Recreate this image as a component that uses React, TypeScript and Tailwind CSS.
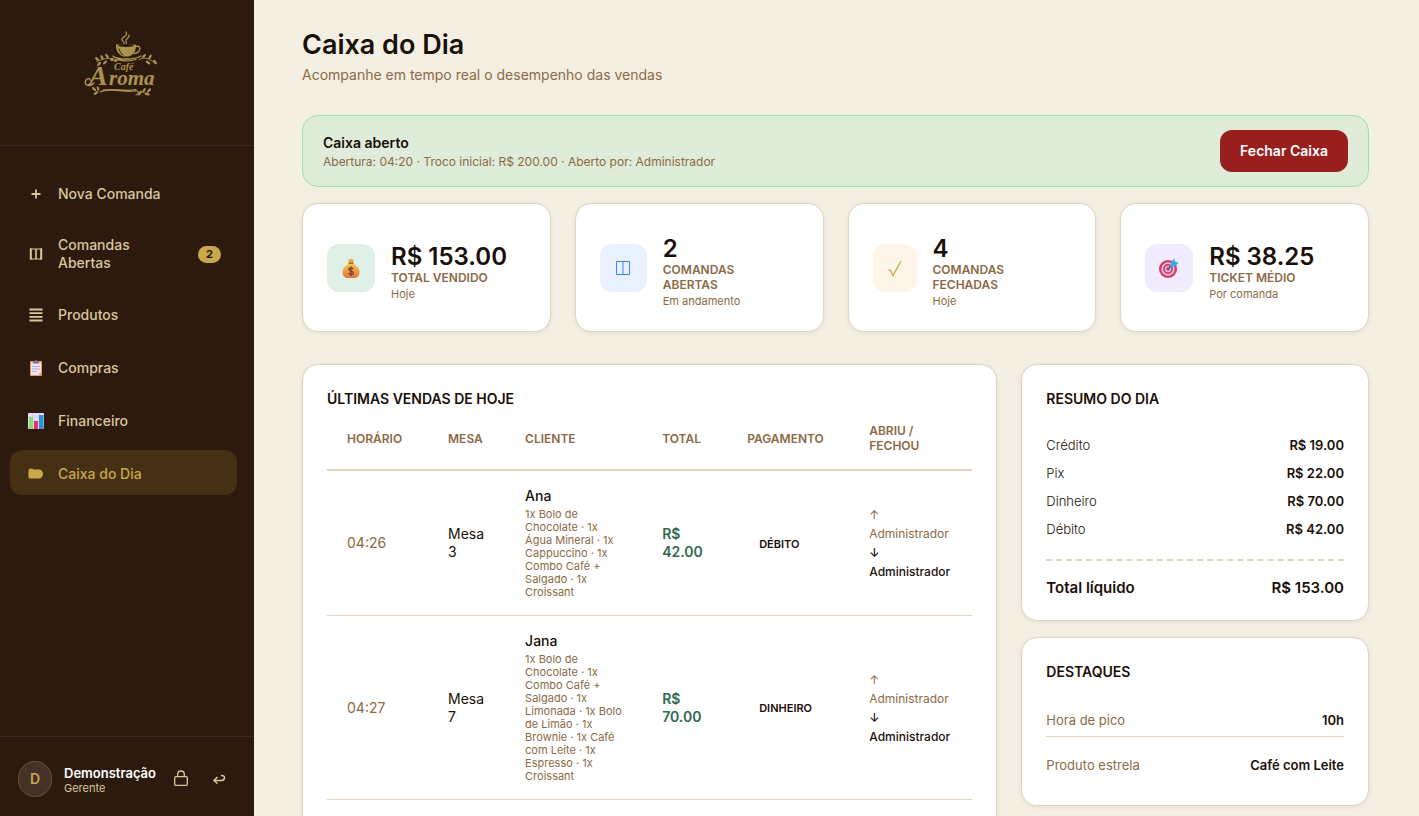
import type { ReactNode } from "react";
import clsx from "clsx";

type NavItemType = {
  label: string;
  icon: ReactNode;
  badge?: number;
  active?: boolean;
};

type SaleType = {
  time: string;
  table: string;
  client: string;
  items: string;
  total: string;
  payment: string;
};

const Logo = () => (
  <svg
    width="76"
    height="66"
    viewBox="0 0 76 66"
    fill="none"
    stroke="#ab9350"
    strokeLinecap="round"
    role="img"
    aria-label="Café Aroma"
  >
    {/* Steam */}
    <path d="M43 1c3 4-5 5-4 8 1 2 3 2 2 4M46 4c1 3-4 4-3 6 0 1 1 2 0 3" strokeWidth="1.300" />
    {/* Cup */}
    <path d="M33.500 14h19c0 7-3 10-7 11h-5c-4-1-7-4-7-11z" fill="#ab9350" strokeWidth="1" />
    <ellipse cx="43" cy="14.500" rx="8" ry="1.500" fill="#2c1a0f" stroke="none" />
    <path d="M36 18c1 3 2 5 4 6" stroke="#2c1a0f" strokeWidth="1" />
    <path d="M52.500 15.500c4-1 5 1 4 3.500-1 3-4 3.500-6 3.500" strokeWidth="1.400" />
    <path d="M30 25c4 4 22 4 28 0M34 28.500c6 1.500 14 1.500 19 0" strokeWidth="1.300" />
    {/* Branches */}
    <path d="M31 28.500c-6-2-11-1-17 2M56 28.500c6-3 11-1 16 4" strokeWidth=".9" />
    <g fill="#ab9350" stroke="none">
      <ellipse cx="24" cy="25" rx="2.600" ry="1.200" transform="rotate(55 24 25)" />
      <ellipse cx="19" cy="26.500" rx="2.600" ry="1.200" transform="rotate(60 19 26.500)" />
      <ellipse cx="14" cy="28" rx="2.400" ry="1.200" transform="rotate(40 14 28)" />
      <ellipse cx="22" cy="31.500" rx="2.600" ry="1.200" transform="rotate(-45 22 31.500)" />
      <ellipse cx="16" cy="33" rx="2.600" ry="1.200" transform="rotate(-50 16 33)" />
      <ellipse cx="61" cy="25" rx="2.600" ry="1.200" transform="rotate(-45 61 25)" />
      <ellipse cx="67" cy="26" rx="2.600" ry="1.200" transform="rotate(-60 67 26)" />
      <ellipse cx="65" cy="31.500" rx="2.600" ry="1.200" transform="rotate(35 65 31.500)" />
      <ellipse cx="72" cy="31" rx="2.600" ry="1.200" transform="rotate(50 72 31)" />
      <circle cx="29" cy="28.500" r="1.800" />
      <circle cx="32.500" cy="29.500" r="1.600" />
    </g>
    <g fill="#ab9350" stroke="none" className="font-['Liberation_Serif',serif] font-bold italic">
      <text x="31" y="39" className="text-[10px]">
        Café
      </text>
      <text x="6" y="54" className="text-[28px]">
        A
      </text>
      <text x="26" y="54" className="text-[21px]">
        roma
      </text>
    </g>
    {/* Flourish */}
    <path d="M11 52c-4 4-10 3-8.500-2 1-3 4.500-3 4.500-1" strokeWidth="1.500" />
    <path d="M17 61c11-5 23 1 34-1 5-1 6 3 2 4M20 59c12-2 22 2 33-.5" strokeWidth="1.200" />
    <g fill="#ab9350" stroke="none">
      <ellipse cx="11" cy="58" rx="2.600" ry="1.200" transform="rotate(40 11 58)" />
      <ellipse cx="15" cy="57.500" rx="2.400" ry="1.100" transform="rotate(70 15 57.500)" />
      <ellipse cx="13" cy="62" rx="2.600" ry="1.200" transform="rotate(-35 13 62)" />
      <ellipse cx="57" cy="62" rx="3" ry="1.200" transform="rotate(-55 57 62)" />
      <ellipse cx="61" cy="59.500" rx="2.800" ry="1.200" transform="rotate(-60 61 59.500)" />
      <ellipse cx="66" cy="59.500" rx="2.800" ry="1.200" transform="rotate(-45 66 59.500)" />
      <ellipse cx="64" cy="63" rx="2.800" ry="1.200" transform="rotate(15 64 63)" />
    </g>
  </svg>
);

const PlusIcon = () => (
  <svg width="16" height="16" viewBox="0 0 16 16" stroke="currentColor" strokeWidth="1.800">
    <path d="M8 3.500v9M3.500 8h9" />
  </svg>
);

const PanelsIcon = () => (
  <svg width="16" height="16" viewBox="0 0 16 16" fill="none" stroke="currentColor">
    <path d="M2.800 2.500v11M13.200 2.500v11" strokeWidth="2" />
    <path d="M2 3h12M2 13h12" strokeWidth="1.200" />
    <path d="M8 3v10" strokeWidth="1.600" />
  </svg>
);

const LinesIcon = () => (
  <svg width="16" height="16" viewBox="0 0 16 16" stroke="currentColor" strokeWidth="1.800">
    <path d="M1.500 2.500h13M1.500 6.200h13M1.500 9.800h13M1.500 13.500h13" />
  </svg>
);

const ClipboardIcon = () => (
  <svg width="18" height="18" viewBox="0 0 18 18">
    <rect x="3" y="2" width="12" height="15" rx=".8" fill="#e3965f" />
    <path d="M4 3.500h10V14l-2 2H4z" fill="#ece6f3" />
    <path d="M14 14h-2v2z" fill="#c3b5d0" />
    <path d="M6 4.500V2.500h1.500a1.500 1.500 0 0 1 3 0H12v2z" fill="#7b7084" />
    <path d="M5 7.500h8M5 10h8M5 12.500h4.500" stroke="#b3a6c2" strokeWidth=".9" />
  </svg>
);

const ChartIcon = () => (
  <svg width="18" height="18" viewBox="0 0 18 18">
    <rect x="1" y="1" width="16" height="16" rx="1" fill="#e5dff0" />
    <path d="M1 5h16M1 9h16M6 1v16M12 1v16" stroke="#c8bed6" strokeWidth=".6" />
    <rect x="2" y="5" width="4" height="12" fill="#86dc70" />
    <rect x="7" y="9" width="4" height="8" fill="#e5326f" />
    <rect x="12" y="3" width="4.500" height="14" fill="#2f8ddd" />
  </svg>
);

const CashIcon = () => (
  <svg width="18" height="18" viewBox="0 0 18 18" fill="currentColor">
    <path d="M1.500 5.500c0-1 .5-1.500 1.300-1.300.8-.9 2.800-.9 3.700.3h5.200c2.700 0 4.300 2 4.300 4.500 0 2.900-1.800 4.500-4.500 4.500H3c-1 0-1.500-.5-1.500-1.500z" />
  </svg>
);

const LockIcon = () => (
  <svg width="16" height="18" viewBox="0 0 16 18" fill="none" stroke="currentColor" strokeWidth="1.300">
    <rect x="1.700" y="6.700" width="12.600" height="8.600" rx="1.200" />
    <path d="M4.700 6.500V4.300a3.300 3.300 0 0 1 6.600 0v2.200" />
  </svg>
);

const ReturnIcon = () => (
  <svg width="14" height="14" viewBox="0 0 14 14" fill="none" stroke="currentColor" strokeWidth="1.500">
    <path d="M9 3.500c2-.4 3.500.5 3.500 2.100C12.500 7.200 11.500 8.500 9.500 8.500H2.500" />
    <path d="M5.500 5 2 8.500l3.500 3" />
  </svg>
);

const MoneyBagIcon = () => (
  <svg width="22" height="22" viewBox="0 0 22 22">
    <defs>
      <linearGradient id="bag" x1="0" y1="0" x2="0" y2="1">
        <stop offset="0" stopColor="#fbc94b" />
        <stop offset="1" stopColor="#e0723f" />
      </linearGradient>
    </defs>
    <path d="M8 2.500c1 .6 1.600-.5 3-.5s2 1.100 3 .5L13 6H9z" fill="#f3ab3d" />
    <path d="M9 6.500h4c3.500 2 6.500 5 6.500 8.500 0 3.500-2 6-5 6h-7c-3 0-5-2.500-5-6 0-3.500 3-6.500 6.500-8.500z" fill="url(#bag)" />
    <path d="M8.500 6.200h5" stroke="#8f4b36" strokeWidth="1.200" />
    <path d="M13.300 12.200c-.4-1-1.200-1.300-2.300-1.300-1.300 0-2.200.6-2.200 1.500 0 2.200 4.600 1.200 4.600 3.400 0 1.100-1 1.600-2.400 1.600-1.200 0-2.100-.4-2.500-1.400M11 9.500v9.500" fill="none" stroke="#703b35" strokeWidth="1.200" />
  </svg>
);

const BlueBoxIcon = () => (
  <svg width="18" height="18" viewBox="0 0 18 18" fill="none" stroke="#3b82f6">
    <path d="M2.500 2.500h13v13h-13zM9 2.500v13" />
  </svg>
);

const CheckIcon = () => (
  <svg width="18" height="18" viewBox="0 0 18 18" fill="none" stroke="#c9a84c" strokeWidth="1.300">
    <path d="M2.500 11.500c1-1 1.700-.6 2.200.5L7 16.500 15 2" />
  </svg>
);

const TargetIcon = () => (
  <svg width="22" height="22" viewBox="0 0 22 22" fill="none">
    <circle cx="10" cy="12" r="9" fill="#dc3265" />
    <circle cx="10" cy="12" r="5.800" stroke="#d9c6dc" strokeWidth="1.800" />
    <circle cx="10" cy="12" r="2.500" stroke="#d9c6dc" strokeWidth="1.400" />
    <path d="M10 12l6-6" stroke="#3767a8" strokeWidth="1.600" />
    <path d="M12.500 9.500l.5-4L16 1.500l1.200 3L20.500 6 17 9.500z" fill="#38a9ee" />
  </svg>
);

const navItems: NavItemType[] = [
  { label: "Nova Comanda", icon: <PlusIcon /> },
  { label: "Comandas Abertas", icon: <PanelsIcon />, badge: 2 },
  { label: "Produtos", icon: <LinesIcon /> },
  { label: "Compras", icon: <ClipboardIcon /> },
  { label: "Financeiro", icon: <ChartIcon /> },
  { label: "Caixa do Dia", icon: <CashIcon />, active: true },
];

const stats = [
  { value: "R$ 153.00", label: "Total vendido", hint: "Hoje", icon: <MoneyBagIcon />, tile: "w-12 bg-[#dff1e6]" },
  { value: "2", label: "Comandas abertas", hint: "Em andamento", icon: <BlueBoxIcon />, tile: "w-[47px] bg-[#e9f0fe]" },
  { value: "4", label: "Comandas fechadas", hint: "Hoje", icon: <CheckIcon />, tile: "w-11 bg-[#fdf6e8]" },
  { value: "R$ 38.25", label: "Ticket médio", hint: "Por comanda", icon: <TargetIcon />, tile: "w-12 bg-[#f1ecfd]" },
];

const columns = [
  { label: "Horário", width: "w-[101px]" },
  { label: "Mesa", width: "w-[77px]" },
  { label: "Cliente", width: "w-[137px]" },
  { label: "Total", width: "w-[85px]" },
  { label: "Pagamento", width: "w-[122px]" },
  { label: "Abriu / Fechou", width: "w-[123px]" },
];

const sales: SaleType[] = [
  {
    time: "04:26",
    table: "Mesa 3",
    client: "Ana",
    items:
      "1x Bolo de Chocolate · 1x Água Mineral · 1x Cappuccino · 1x Combo Café + Salgado · 1x Croissant",
    total: "R$ 42.00",
    payment: "Débito",
  },
  {
    time: "04:27",
    table: "Mesa 7",
    client: "Jana",
    items:
      "1x Bolo de Chocolate · 1x Combo Café + Salgado · 1x Limonada · 1x Bolo de Limão · 1x Brownie · 1x Café com Leite · 1x Espresso · 1x Croissant",
    total: "R$ 70.00",
    payment: "Dinheiro",
  },
];

const summary = [
  ["Crédito", "R$ 19.00"],
  ["Pix", "R$ 22.00"],
  ["Dinheiro", "R$ 70.00"],
  ["Débito", "R$ 42.00"],
];

const Card = ({ className, children }: { className?: string; children: ReactNode }) => (
  <section
    className={clsx("rounded-2xl border border-[#e0d5bc] bg-white px-6 shadow-[0_1px_4px_rgba(44,26,15,0.08)]", className)}
  >
    {children}
  </section>
);

const CardTitle = ({ children }: { children: ReactNode }) => (
  <h2 className="text-sm leading-5 font-semibold uppercase">{children}</h2>
);

const Sidebar = () => (
  <aside className="flex w-[254px] shrink-0 flex-col bg-[#2c1a0f] text-[#d9c79c]">
    <div className="flex h-[146px] justify-center border-b border-[#3b2a1f] pt-[31px] pr-3">
      <Logo />
    </div>
    <nav className="flex flex-1 flex-col gap-2 pt-6 pr-[17px] pl-[10px]">
      {navItems.map((item) => (
        <a
          key={item.label}
          href="#"
          className={clsx(
            "flex items-center gap-3 rounded-xl px-4 pt-[13px] pb-[11px] text-sm leading-[18px] font-medium",
            item.active && "bg-[#453014] text-[#c9a84c]"
          )}
        >
          <span className="flex h-[21px] w-5 items-center justify-center">{item.icon}</span>
          <span className="w-28">{item.label}</span>
          {item.badge && (
            <span className="ml-auto rounded-full bg-[#c9a84c] px-2 text-[11px] leading-[17px] font-bold text-[#1a0f08]">
              {item.badge}
            </span>
          )}
        </a>
      ))}
    </nav>
    <div className="flex items-center border-t border-[#3b2a1f] pt-6 pr-[21px] pb-[19px] pl-[18px]">
      <div className="flex h-9 w-[34px] items-center justify-center rounded-full border border-[#6b5330] bg-[#443127] text-sm font-semibold text-[#c9a84c]">
        D
      </div>
      <div className="ml-3 flex-1 pt-[2px]">
        <p className="text-[13px] leading-4 font-semibold text-white">Demonstração</p>
        <p className="text-[11px] leading-[14px]">Gerente</p>
      </div>
      <button type="button" aria-label="Bloquear" className="flex w-8 justify-center">
        <LockIcon />
      </button>
      <button type="button" aria-label="Sair" className="ml-2 flex w-7 justify-center">
        <ReturnIcon />
      </button>
    </div>
  </aside>
);

const SalesTable = () => (
  <table className="w-full table-fixed border-separate border-spacing-0 text-left">
    <thead>
      <tr>
        {columns.map((column) => (
          <th
            key={column.label}
            className={clsx(
              "border-b-2 border-[#e0d5bc] pt-[14px] pb-4 pl-5 text-xs leading-[15px] font-semibold text-[#8b6a45] uppercase last:pr-5",
              column.width
            )}
          >
            {column.label}
          </th>
        ))}
      </tr>
    </thead>
    <tbody className="text-sm leading-[18px] [&_td]:border-b [&_td]:border-[#e0d5bc] [&_td]:py-4 [&_td]:pl-5">
      {sales.map((sale) => (
        <tr key={sale.time}>
          <td className="text-[#8b6a45]">{sale.time}</td>
          <td className="pr-5">{sale.table}</td>
          <td className="pr-5">
            <p className="font-medium">{sale.client}</p>
            <p className="mt-[3px] text-[11px] leading-[13px] text-[#8b6a45]">{sale.items}</p>
          </td>
          <td className="pr-5 font-semibold text-[#2d6a4f]">{sale.total}</td>
          <td>
            <span className="px-3 text-[11px] font-semibold uppercase">{sale.payment}</span>
          </td>
          <td className="text-xs leading-[19px]">
            <p className="text-[#8b6a45]">
              ↑<br />
              Administrador
            </p>
            <p className="font-medium">
              ↓<br />
              Administrador
            </p>
          </td>
        </tr>
      ))}
    </tbody>
  </table>
);

export default function App() {
  return (
    <div className="flex h-screen overflow-hidden bg-[#f4efe3] font-['Inter',sans-serif] text-[#1a0f08]">
      <Sidebar />
      <main className="min-w-0 flex-1 overflow-hidden pt-7 pr-[50px] pl-12">
        <h1 className="text-[27px] leading-[34px] font-semibold">Caixa do Dia</h1>
        <p className="mt-[3px] text-sm leading-5 text-[#8b6a45]">
          Acompanhe em tempo real o desempenho das vendas
        </p>

        <div className="mt-[30px] flex items-center justify-between rounded-2xl border border-[#9bdfae] bg-[#dfecd9] px-5 py-[14px]">
          <div className="pt-[2px]">
            <p className="text-sm leading-5 font-semibold">Caixa aberto</p>
            <p className="text-xs leading-[18px] text-[#8b6a45]">
              Abertura: 04:20 · Troco inicial: R$ 200.00 · Aberto por: Administrador
            </p>
          </div>
          <button type="button" className="h-[42px] rounded-xl bg-[#991f1f] px-5 text-sm font-semibold text-white">
            Fechar Caixa
          </button>
        </div>

        <div className="mt-4 grid grid-cols-4 gap-6">
          {stats.map((stat) => (
            <Card key={stat.label} className="flex items-center gap-4 py-[22px]">
              <div className={clsx("flex h-12 shrink-0 items-center justify-center rounded-xl", stat.tile)}>
                {stat.icon}
              </div>
              <div className="min-w-0 pt-[9px] pb-px">
                <p className="text-2xl leading-[27px] font-semibold">{stat.value}</p>
                <p className="max-w-28 text-xs leading-[15px] font-semibold text-[#8b6a45] uppercase">{stat.label}</p>
                <p className="mt-[2px] text-[11px] leading-[14px] text-[#8b6a45]">{stat.hint}</p>
              </div>
            </Card>
          ))}
        </div>

        <div className="mt-8 grid grid-cols-[2fr_1fr] gap-6">
          <Card className="pt-6 pb-12">
            <CardTitle>Últimas vendas de hoje</CardTitle>
            <SalesTable />
          </Card>

          <div className="flex flex-col gap-4">
            <Card className="pt-6 pb-[22px]">
              <CardTitle>Resumo do dia</CardTitle>
              <dl className="mt-[22px] text-[13px] leading-7">
                {summary.map(([label, value]) => (
                  <div key={label} className="flex justify-between">
                    <dt className="font-light">{label}</dt>
                    <dd className="font-semibold">{value}</dd>
                  </div>
                ))}
              </dl>
              <div className="mt-4 flex justify-between border-t-2 border-dashed border-[#e0d5bc] pt-[17px] text-[15px] leading-5 font-semibold">
                <span>Total líquido</span>
                <span>R$ 153.00</span>
              </div>
            </Card>

            <Card className="pt-6 pb-6">
              <CardTitle>Destaques</CardTitle>
              <dl className="mt-5 flex flex-col gap-[10px] text-[13px] leading-[18px]">
                <div className="flex justify-between border-b border-[#e0d5bc] pt-[9px] pb-[7px]">
                  <dt className="text-[#8b6a45]">Hora de pico</dt>
                  <dd className="font-semibold">10h</dd>
                </div>
                <div className="flex justify-between pt-[9px] pb-[7px]">
                  <dt className="text-[#8b6a45]">Produto estrela</dt>
                  <dd className="font-semibold">Café com Leite</dd>
                </div>
              </dl>
            </Card>
          </div>
        </div>
      </main>
    </div>
  );
}
